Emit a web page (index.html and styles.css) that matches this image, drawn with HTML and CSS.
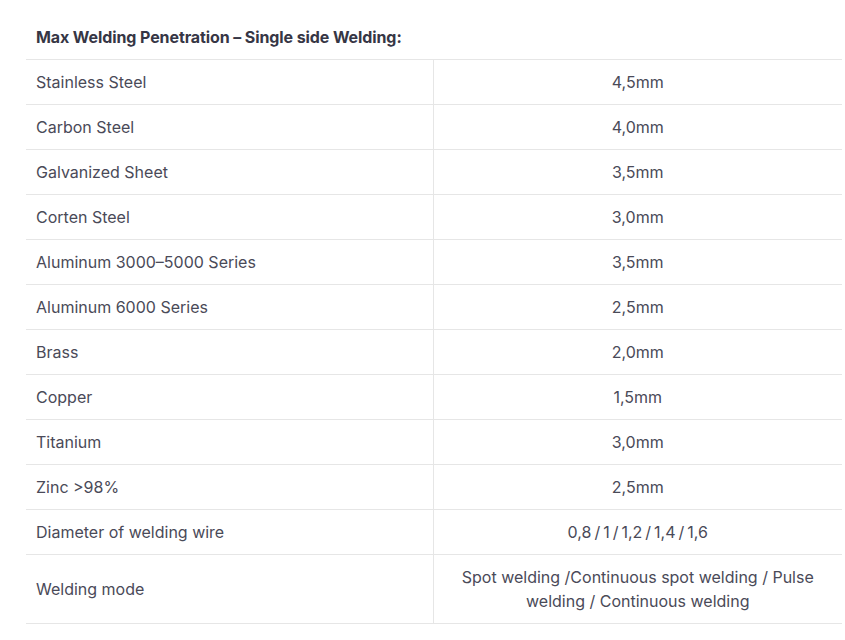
FILE: index.html
```html
<!DOCTYPE html>
<html lang="en">
<head>
<meta charset="utf-8">
<title>Max Welding Penetration</title>
<link rel="stylesheet" href="styles.css">
</head>
<body>
<div class="page">
  <table class="spec">
    <colgroup>
      <col class="col-name">
      <col class="col-val">
    </colgroup>
    <thead>
      <tr><th colspan="2" class="title">Max Welding Penetration – Single side Welding:</th></tr>
    </thead>
    <tbody>
      <tr><td>Stainless Steel</td><td class="val">4,5mm</td></tr>
      <tr><td>Carbon Steel</td><td class="val">4,0mm</td></tr>
      <tr><td>Galvanized Sheet</td><td class="val">3,5mm</td></tr>
      <tr><td>Corten Steel</td><td class="val">3,0mm</td></tr>
      <tr><td>Aluminum 3000–5000 Series</td><td class="val">3,5mm</td></tr>
      <tr><td>Aluminum 6000 Series</td><td class="val">2,5mm</td></tr>
      <tr><td>Brass</td><td class="val">2,0mm</td></tr>
      <tr><td>Copper</td><td class="val">1,5mm</td></tr>
      <tr><td>Titanium</td><td class="val">3,0mm</td></tr>
      <tr><td>Zinc &gt;98%</td><td class="val">2,5mm</td></tr>
      <tr><td>Diameter of welding wire</td><td class="val tight">0,8 / 1 / 1,2 / 1,4 / 1,6</td></tr>
      <tr><td>Welding mode</td><td class="val">Spot welding /Continuous spot welding / Pulse welding / Continuous welding</td></tr>
    </tbody>
  </table>
</div>
</body>
</html>
```
FILE: styles.css
```css
html, body {
  margin: 0;
  padding: 0;
  background: #ffffff;
}
.page {
  padding: 15px 3px 0 26px;
  font-family: "Inter", "Liberation Sans", sans-serif;
  font-size: 16px;
  color: #4a4a58;
}
.spec {
  width: 816px;
  border-collapse: collapse;
  table-layout: fixed;
}
.col-name {
  width: 407px;
}
.col-val {
  width: 409px;
}
.spec th,
.spec td {
  padding: 10px 10px;
  line-height: 24px;
  text-align: left;
  vertical-align: middle;
}
.spec .title {
  font-weight: 700;
  color: #363645;
  letter-spacing: -0.1px;
}
.spec tbody td {
  border-top: 1px solid #e6e6e6;
  border-bottom: 1px solid #e6e6e6;
}
.spec tbody td:first-child {
  border-right: 1px solid #e6e6e6;
}
.spec .val {
  text-align: center;
}
.spec .tight {
  word-spacing: -1.5px;
}
```
